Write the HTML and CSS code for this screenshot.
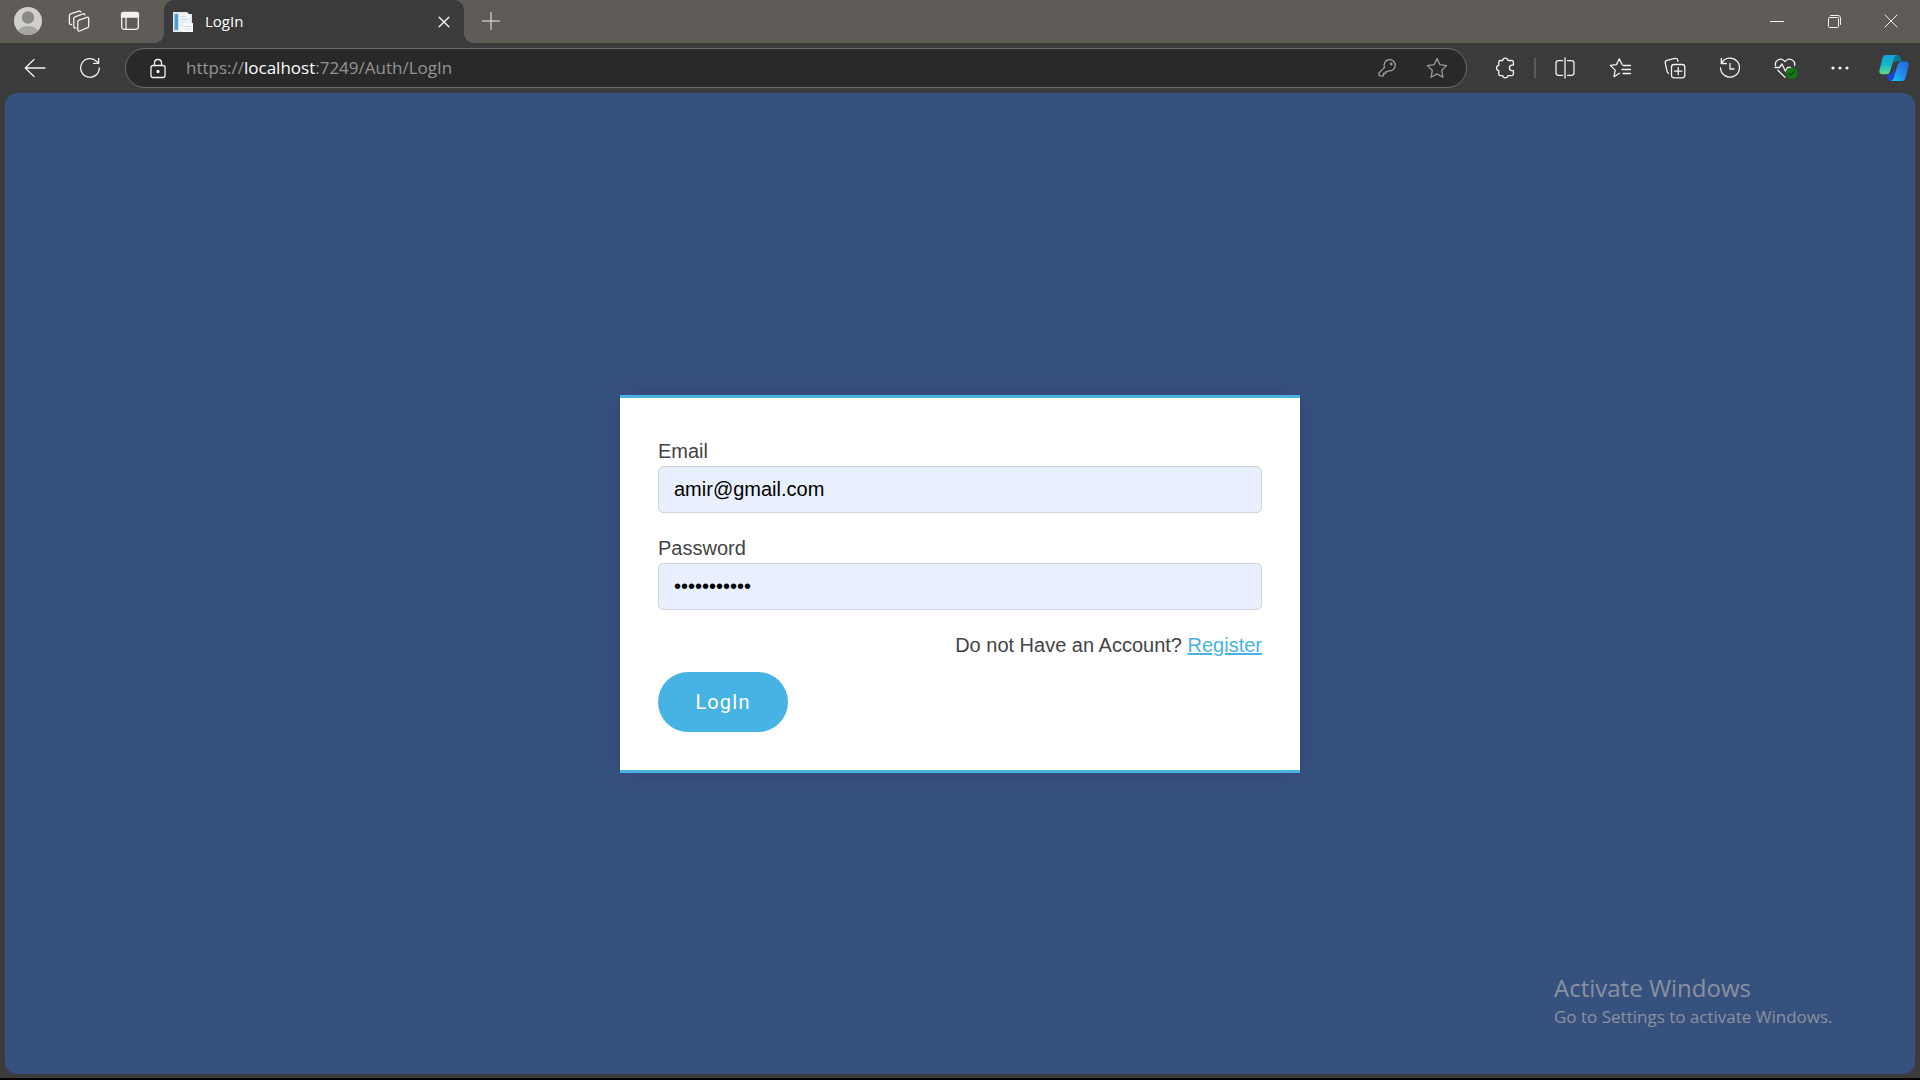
FILE: index.html
```html
<!DOCTYPE html>
<html lang="en">
<head>
<meta charset="utf-8">
<meta name="viewport" content="width=device-width, initial-scale=1">
<title>LogIn</title>
<link rel="stylesheet" href="styles.css">
</head>
<body>
<div class="browser">
  <header class="titlebar">
    <div class="title-tools">
      <button class="title-btn" type="button" aria-label="Profile">
        <svg class="avatar" viewBox="0 0 28 28">
          <clipPath id="face"><circle cx="14" cy="14" r="14"/></clipPath>
          <g clip-path="url(#face)"><rect width="28" height="28" fill="#d1cfcc"/><circle cx="14" cy="10.500" r="6.200" fill="#8d8b89"/><ellipse cx="14" cy="27" rx="11" ry="8" fill="#a7a5a2"/></g>
        </svg>
      </button>
      <button class="title-btn" type="button" aria-label="Workspaces">
        <svg class="icon" viewBox="0 0 24 24"><path d="M10.800 13q0-1.300 1.200-1.800L20 8.300q1.700-.5 1.700 1.200V17q0 1.200-1.100 1.700L12.600 22q-1.800.6-1.800-1.200ZM9 18.900q-2.200.6-2.200-1.200V9.500q0-1.200 1.200-1.700L16 4.900q1.500-.5 1.900.9M4.600 15.500q-2.200.3-2.200-1.500V6.600q0-1.200 1.200-1.700L12 2.200q1.400-.4 1.900.8"/></svg>
      </button>
      <button class="title-btn" type="button" aria-label="Tab actions">
        <svg class="icon" viewBox="0 0 24 24"><rect x="3.700" y="3.700" width="16.600" height="16.600" rx="2.500"/><path d="M3.500 8V5.500q0-2 2-2h13q2 0 2 2V8Z" fill="currentColor"/><path d="M8 8v12"/></svg>
      </button>
    </div>
    <div class="tab">
      <svg class="favicon" viewBox="0 0 20 20"><path d="M0 0h14l2 2h3v18H0Z" fill="#dfe9f1"/><path d="M1.500 2h4v16h-4Z" fill="#4f9fd0"/><path d="M5.500 1h8l4 3v15h-12Z" fill="#f0f2f6"/><path d="M8 4.500h5M8 7.500h6M8 10.500h3M8 13.500h2" stroke="#d3dae6"/><path d="M14 1.500 18 5h-4Z" fill="#fff"/><path d="M10 11h10v9H10Z" fill="#f9fafc"/><path d="M10.500 14.500h9M12 17h6" stroke="#d6dce6"/></svg>
      <span class="tab-title">LogIn</span>
      <button class="tab-close" type="button" aria-label="Close tab">
        <svg class="icon-s" viewBox="0 0 12 12"><path d="m1.200 1.200 9.600 9.600M10.800 1.200l-9.600 9.600"/></svg>
      </button>
    </div>
    <button class="new-tab" type="button" aria-label="New tab">
      <svg class="icon-plus" viewBox="0 0 18 18"><path d="M9 .5v17M.5 9h17"/></svg>
    </button>
    <div class="window-controls">
      <button type="button" aria-label="Minimize"><svg class="icon-w" viewBox="0 0 14 14"><path d="M.5 7.500h13"/></svg></button>
      <button type="button" aria-label="Restore"><svg class="icon-w" viewBox="0 0 14 14"><rect x="1.500" y="3.500" width="10" height="10" rx="1"/><path d="M3.500 1.500h7.500q2.500 0 2.500 2.500v6.500"/></svg></button>
      <button type="button" aria-label="Close"><svg class="icon-w" viewBox="0 0 14 14"><path d="m1 1 12 12M13 1 1 13"/></svg></button>
    </div>
  </header>

  <nav class="toolbar">
    <button class="tool" type="button" aria-label="Back"><svg class="icon" viewBox="0 0 24 24"><path d="M22 12H2.500M11 3.500 2.300 12l8.700 8.500"/></svg></button>
    <button class="tool" type="button" aria-label="Refresh"><svg class="icon" viewBox="0 0 24 24"><path d="M21.300 12A9.300 9.300 0 1 1 18.600 5.400L20.600 7.400M20.600 2.300v5.100h-5"/></svg></button>
    <div class="address">
      <svg class="icon" viewBox="0 0 24 24"><rect x="5" y="9.500" width="14" height="12" rx="2"/><path d="M8.500 9.500V7q0-3.500 3.500-3.500T15.500 7v2.500"/><circle cx="12" cy="15.500" r="1" fill="currentColor"/></svg>
      <span class="url">https://<b>localhost</b>:7249/Auth/LogIn</span>
      <button class="addr-btn" type="button" aria-label="Password key"><svg class="icon" viewBox="0 0 24 24"><path d="M9.500 11.400A5.600 5.600 0 1 1 13.400 14.700L12.200 15.800H10.500V17.500H8.500V19.800H4.800Q4 19.800 4 19V17Z"/><circle cx="16.200" cy="8" r=".8" fill="currentColor"/></svg></button>
      <button class="addr-btn" type="button" aria-label="Add to favorites"><svg class="icon" viewBox="0 0 24 24"><path d="m12 2.500 2.900 6.200 6.700.9-4.900 4.700 1.200 6.900-5.900-3.300-5.900 3.300 1.200-6.900-4.900-4.700 6.700-.9Z"/></svg></button>
    </div>
    <div class="tools">
      <button class="tool" type="button" aria-label="Extensions"><svg class="icon" viewBox="0 0 24 24"><path d="M7.300 4.500h2.400c.3-3.300 5-3.300 5.300 0h3.700q1.700 0 1.700 1.700v3H19c-3.400.2-3.400 5.200 0 5.400h1.400V18q0 1.700-1.700 1.700H15c-.4 2.800-4.900 2.800-5.300 0H7.300q-1.500 0-1.500-1.600v-3.400c-3-.4-3-4.900 0-5.300V6.100q0-1.600 1.500-1.600Z"/></svg></button>
      <span class="divider"></span>
      <button class="tool" type="button" aria-label="Split screen"><svg class="icon" viewBox="0 0 24 24"><path d="M12 2v20M9.500 4.700h-4q-2.500 0-2.500 2.500v9.600q0 2.500 2.500 2.500h4M14.500 4.700h4q2.500 0 2.500 2.500v9.600q0 2.500-2.500 2.500h-4"/></svg></button>
      <button class="tool" type="button" aria-label="Favorites"><svg class="icon" viewBox="0 0 24 24"><path d="M11.500 17.300 6 20.700l1.200-6.600L2.300 9.400l6.200-.8L11.300 2.800l2.700 5.600M15 9.500h7.500M14 13.500h8.500M15 17.500h7.500"/></svg></button>
      <button class="tool" type="button" aria-label="Collections"><svg class="icon" viewBox="0 0 24 24"><rect x="8.500" y="8.500" width="13.300" height="13.300" rx="2.500"/><path d="M15.200 11.500v7.300M11.500 15.200h7.300M5.600 17.300q-1-.3-1.400-1.500L2.300 7.300Q1.800 5 4 4.400l8-2q2-.5 2.700 1.500l.3 1.500"/></svg></button>
      <button class="tool" type="button" aria-label="History"><svg class="icon" viewBox="0 0 24 24"><path d="M3.300 2.500v5h5M3.500 7.300A9.500 9.500 0 1 1 2.500 12M12 7.500V13h4"/></svg></button>
      <button class="tool" type="button" aria-label="Browser essentials"><svg class="icon" viewBox="0 0 24 24"><path d="M2.600 9.500C1.300 4.500 8 .5 12 5.600c4-5.100 10.700-1.100 9.600 3.900M2 11.500h4.500L9 8l3.300 7 2.200-3.500h3.200M4.800 14.200l7.200 7"/><circle cx="18.800" cy="17.300" r="5.700" fill="#107c10" stroke="none"/><path d="m16.200 17.500 1.700 1.700 3.500-3.600" stroke="#173817"/></svg></button>
      <button class="tool" type="button" aria-label="Settings and more"><svg class="icon" viewBox="0 0 24 24"><g fill="currentColor" stroke="none"><circle cx="5" cy="12" r="1.600"/><circle cx="12" cy="12" r="1.600"/><circle cx="19" cy="12" r="1.600"/></g></svg></button>
      <button class="tool tool-copilot" type="button" aria-label="Copilot">
        <svg class="copilot" viewBox="0 0 30 28">
          <defs>
            <linearGradient id="cl" x1="0" y1="0" x2="0" y2="1"><stop offset="0" stop-color="#16a0df"/><stop offset=".5" stop-color="#12b5c9"/><stop offset="1" stop-color="#62dd8c"/></linearGradient>
            <linearGradient id="cr" x1="1" y1="0" x2="0" y2="1"><stop offset="0" stop-color="#2267dc"/><stop offset=".5" stop-color="#2488ee"/><stop offset="1" stop-color="#14cdf4"/></linearGradient>
          </defs>
          <path d="M14 1h4q3 0 3.800 3l1 3.300h-4q-2.800 0-3.600 2.500Z" fill="#0b7690"/>
          <path d="M8 20h5l2-6 2 7-2.500 6H12q-2.500 0-3.200-3Z" fill="#1747d1"/>
          <path d="M7 1h11q-2 .5-2.800 3l-4 13q-1 3.200-4 3.200H3.500Q-.5 20.200.6 15.800L3.500 4Q4.300 1 7 1Z" fill="url(#cl)"/>
          <path d="M23 27H12q2-.5 2.800-3l4-13.400q1-3 4-3h3.700q4 0 2.900 4.300L26.500 24Q25.700 27 23 27Z" fill="url(#cr)"/>
        </svg>
      </button>
    </div>
  </nav>

  <main class="page">
    <form class="card">
      <div class="field">
        <label for="email">Email</label>
        <input id="email" type="email" value="amir@gmail.com">
      </div>
      <div class="field">
        <label for="password">Password</label>
        <input id="password" type="password" value="amir1234567">
      </div>
      <p class="register">Do not Have an Account? <a href="#">Register</a></p>
      <button class="login" type="submit">LogIn</button>
    </form>
    <aside class="watermark">
      <p class="watermark-title">Activate Windows</p>
      <p class="watermark-text">Go to Settings to activate Windows.</p>
    </aside>
  </main>
</div>
</body>
</html>
```
FILE: styles.css
```css
* { box-sizing: border-box; }

body {
  margin: 0;
  background: #000;
  font-family: "Liberation Sans", Arial, sans-serif;
}

p { margin: 0; }

button {
  display: flex;
  align-items: center;
  justify-content: center;
  padding: 0;
  border: 0;
  background: none;
  color: inherit;
}

svg {
  display: block;
  flex: none;
  fill: none;
  stroke-linecap: round;
  stroke-linejoin: round;
}

.icon, .icon-s, .icon-plus, .icon-w { stroke: currentColor; }
.icon { width: 24px; height: 24px; stroke-width: 1.3; }
.icon-s { width: 12px; height: 12px; stroke-width: 1.4; }
.icon-plus { width: 18px; height: 18px; }
.icon-w { width: 14px; height: 14px; }
.avatar { width: 28px; height: 28px; }
.copilot { width: 30px; height: 28px; }

.browser {
  display: flex;
  flex-direction: column;
  height: 100vh;
  border-bottom: 2px solid #000;
  background: #3b3b3b;
  color: #f2f2f2;
}

/* Title bar */
.titlebar {
  display: flex;
  height: 43px;
  background: #5f5b57;
}

.title-tools {
  display: flex;
  width: 164px;
  padding: 0 0 2px 2px;
}

.title-btn { width: 51px; }

.tab {
  position: relative;
  display: flex;
  align-items: center;
  width: 300px;
  padding: 0 14px 0 9px;
  border-radius: 10px 10px 0 0;
  background: #3b3b3b;
}

.tab::before, .tab::after {
  content: "";
  position: absolute;
  bottom: 0;
  width: 10px;
  height: 10px;
}

.tab::before {
  right: 100%;
  background: radial-gradient(circle at 0 0, transparent 10px, #3b3b3b 10px);
}

.tab::after {
  left: 100%;
  background: radial-gradient(circle at 100% 0, transparent 10px, #3b3b3b 10px);
}

.favicon { width: 20px; height: 20px; }

.tab-title {
  flex: 1;
  margin-left: 12px;
  padding-bottom: 2px;
  font: 15px/20px "Open Sans", sans-serif;
  color: #fff;
}

.new-tab { width: 54px; padding-bottom: 2px; }

.window-controls {
  display: flex;
  margin-left: auto;
  padding: 0 1px 2px 0;
}

.window-controls button { width: 57px; }

/* Toolbar */
.toolbar {
  display: flex;
  align-items: center;
  height: 50px;
  padding-left: 7px;
}

.tool { width: 55px; height: 40px; }
.tool-copilot { width: 53px; }

.address {
  display: flex;
  flex: 1;
  align-items: center;
  height: 40px;
  margin: 0 10px 0 8px;
  padding: 0 4px 0 20px;
  border: 1px solid #6b6b6b;
  border-radius: 20px;
  background: #292929;
}

.url {
  flex: 1;
  margin-left: 16px;
  font: 17px/24px "Open Sans", sans-serif;
  color: #949494;
}

.url b { font-weight: 400; color: #fff; }

.addr-btn { width: 50px; color: #9b9b9b; }

.tools { display: flex; align-items: center; }

.divider {
  width: 2px;
  height: 20px;
  margin: 0 1px 0 2px;
  background: #5c5c5c;
}

/* Page */
.page {
  position: relative;
  display: flex;
  flex: 1;
  align-items: center;
  justify-content: center;
  margin: 0 5px 4px;
  border-radius: 12px;
  background: #37517e;
}

.card {
  width: 680px;
  padding: 38px;
  border-top: 3px solid #47b2e4;
  border-bottom: 3px solid #47b2e4;
  background: #fff;
  box-shadow: 0 0 24px rgba(0, 0, 0, 0.12);
  color: #444;
  font-size: 20px;
  line-height: 30px;
}

.field { margin-bottom: 20px; }
.field label { display: block; }

.field input {
  display: block;
  width: 100%;
  height: 47px;
  padding: 0 15px;
  border: 1px solid #ced4da;
  border-radius: 5px;
  background: #e8f0fe;
  color: #000;
  font: 20px "Liberation Sans", Arial, sans-serif;
}

.register { margin-bottom: 12px; text-align: right; }
.register a { color: #47b2e4; }

.login {
  width: 130px;
  height: 60px;
  border-radius: 30px;
  background: #47b2e4;
  color: #fff;
  font: 400 20px "Roboto", sans-serif;
  letter-spacing: 1px;
}

.watermark {
  position: absolute;
  right: 76px;
  bottom: 44px;
  width: 285px;
  color: #8a919f;
  font-family: "Open Sans", sans-serif;
  white-space: nowrap;
}

.watermark-title { font-size: 24px; line-height: 32px; }
.watermark-text { font-size: 17px; line-height: 26px; }
```
